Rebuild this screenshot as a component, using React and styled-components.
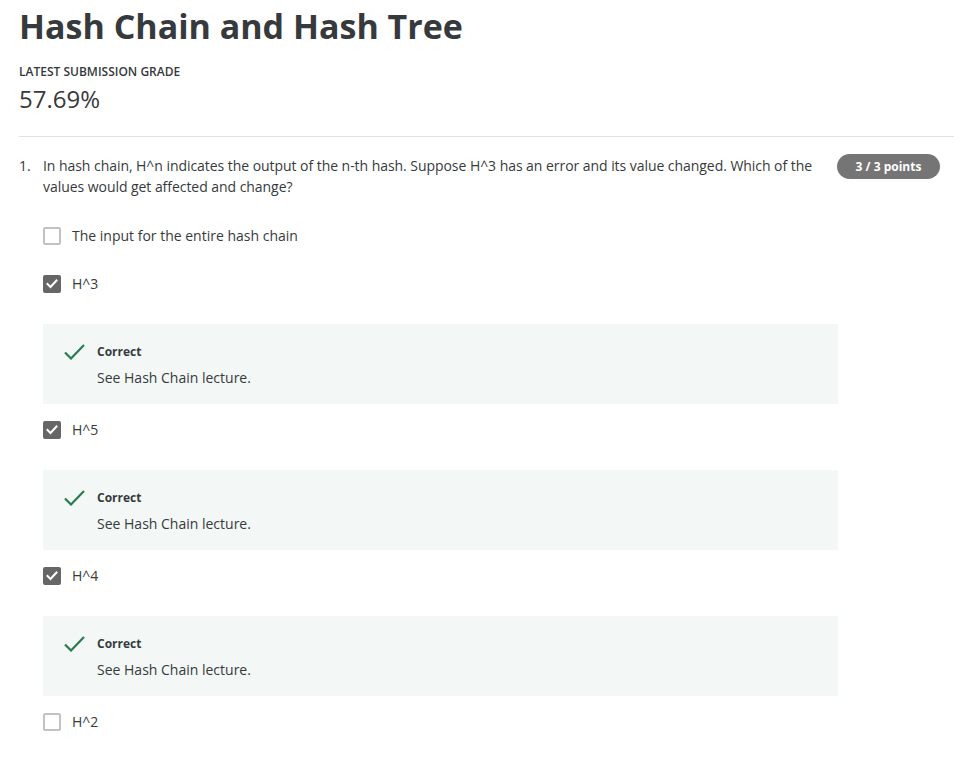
import React from "react";
import styled, { createGlobalStyle } from "styled-components";

const Global = createGlobalStyle`
  html, body { margin: 0; padding: 0; background: #fff; }
  body { font-family: "Open Sans", "Liberation Sans", sans-serif; color: #373a3c; }
`;

const Page = styled.div`
  padding: 5px 12px 0 19px;
`;

const Title = styled.h1`
  margin: 0;
  font-size: 34px;
  line-height: 42.5px;
  font-weight: 700;
  color: #373a3c;
`;

const Label = styled.div`
  margin-top: 16.5px;
  font-size: 12px;
  line-height: 16px;
  font-weight: 600;
  color: #373a3c;
  text-transform: uppercase;
`;

const Grade = styled.div`
  margin-top: 3px;
  font-size: 24px;
  line-height: 32px;
  font-weight: 400;
  color: #373a3c;
`;

const Divider = styled.hr`
  margin: 21px 0 0 0;
  border: none;
  border-top: 1px solid #e1e1e1;
  height: 0;
`;

const QuestionRow = styled.div`
  display: flex;
  align-items: flex-start;
  margin-top: 18px;
  padding-right: 14px;
`;

const Num = styled.div`
  width: 24px;
  flex: none;
  font-size: 14px;
  line-height: 21px;
`;

const QText = styled.div`
  flex: 1;
  font-size: 14px;
  line-height: 21px;
  letter-spacing: -0.05px;
`;

const Badge = styled.div`
  flex: none;
  margin-left: 10px;
  margin-top: -1px;
  width: 103px;
  height: 25px;
  border-radius: 13px;
  background: #757575;
  color: #fff;
  font-size: 12px;
  font-weight: 700;
  display: flex;
  align-items: center;
  justify-content: center;
`;

const Options = styled.div`
  margin-left: 24px;
  margin-top: 30px;
  display: flex;
  flex-direction: column;
`;

const Option = styled.div`
  display: flex;
  flex-direction: column;
  margin-bottom: ${(p) => (p.$feedback ? "17px" : "30px")};
`;

const Row = styled.label`
  display: flex;
  align-items: center;
  height: 18px;
  font-size: 14px;
  line-height: 18px;
  color: #373a3c;
`;

const Box = styled.span`
  box-sizing: border-box;
  width: 18px;
  height: 18px;
  flex: none;
  margin-right: 11px;
  border-radius: 2px;
  border: 2px solid ${(p) => (p.$checked ? "#666" : "#c2c2c2")};
  background: ${(p) => (p.$checked ? "#666" : "#fff")};
  display: flex;
  align-items: center;
  justify-content: center;
`;

const Feedback = styled.div`
  margin-top: 31px;
  width: 795px;
  box-sizing: border-box;
  background: #f3f8f6;
  padding: 19px 20px 16px 21px;
  display: flex;
  align-items: flex-start;
`;

const IconWrap = styled.div`
  width: 21px;
  flex: none;
  margin-right: 12px;
  margin-top: 1px;
`;

const FBody = styled.div`
  display: flex;
  flex-direction: column;
`;

const FTitle = styled.div`
  font-size: 12px;
  line-height: 18px;
  font-weight: 700;
  color: #373a3c;
`;

const FText = styled.div`
  margin-top: 6px;
  font-size: 14px;
  line-height: 21px;
  color: #373a3c;
`;

const Tick = () => (
  <svg width="12" height="10" viewBox="0 0 12 10">
    <polyline points="1.5,5 4.5,8 10.5,1.5" fill="none" stroke="#fff" strokeWidth="2" strokeLinecap="square" />
  </svg>
);

const GreenCheck = () => (
  <svg width="21" height="16" viewBox="0 0 21 16" style={{ display: "block" }}>
    <polyline points="1,8.5 7,14.5 20,1" fill="none" stroke="#2a7b4f" strokeWidth="2.2" />
  </svg>
);

const options = [
  { text: "The input for the entire hash chain", checked: false },
  { text: "H^3", checked: true, feedback: "See Hash Chain lecture." },
  { text: "H^5", checked: true, feedback: "See Hash Chain lecture." },
  { text: "H^4", checked: true, feedback: "See Hash Chain lecture." },
  { text: "H^2", checked: false },
];

export default function App() {
  return (
    <Page>
      <Global />
      <Title>Hash Chain and Hash Tree</Title>
      <Label>Latest Submission Grade</Label>
      <Grade>57.69%</Grade>
      <Divider />
      <QuestionRow>
        <Num>1.</Num>
        <QText>
          In hash chain, H^n indicates the output of the n-th hash. Suppose H^3 has an error and its value changed. Which of the values would get affected and change?
        </QText>
        <Badge>3 / 3 points</Badge>
      </QuestionRow>
      <Options>
        {options.map((o, i) => (
          <Option key={i} $feedback={!!o.feedback}>
            <Row>
              <Box $checked={o.checked}>{o.checked && <Tick />}</Box>
              {o.text}
            </Row>
            {o.feedback && (
              <Feedback>
                <IconWrap>
                  <GreenCheck />
                </IconWrap>
                <FBody>
                  <FTitle>Correct</FTitle>
                  <FText>{o.feedback}</FText>
                </FBody>
              </Feedback>
            )}
          </Option>
        ))}
      </Options>
    </Page>
  );
}
